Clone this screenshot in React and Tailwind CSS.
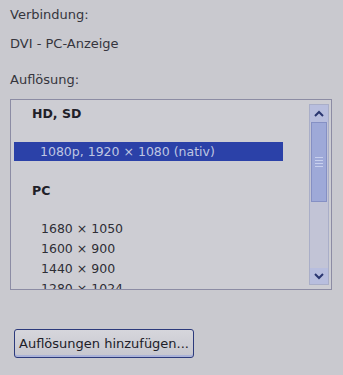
export default function App() {
  const font = { fontFamily: '"DejaVu Sans", "Liberation Sans", sans-serif' };
  return (
    <div className="w-[343px] h-[375px] bg-[#c9c9cf] text-[#35353d] overflow-hidden flex flex-col" style={font}>
      <div className="pl-[10px] pt-[6px] text-[13px] leading-[18px]">Verbindung:</div>
      <div className="pl-[10px] mt-[11px] text-[13px] leading-[18px]">DVI - PC-Anzeige</div>
      <div className="pl-[10px] mt-[18px] text-[13px] leading-[18px]">Auflösung:</div>
      <div className="ml-[10px] mt-[10px] w-[322px] h-[191px] border border-[#8c8ca4] bg-[#cdcdd3] flex overflow-hidden">
        <div className="flex-1 flex flex-col pl-[3px] overflow-hidden">
          <div className="pl-[18px] pt-[5px] h-[24px] text-[12.5px] font-bold leading-[18px] text-[#202028]">HD, SD</div>
          <div className="h-[1px] w-[200px] bg-gradient-to-r from-[#5566c8] via-[#6f7cc8] to-transparent"></div>
          <div className="mt-[19px] w-[269px] h-[19px] bg-[#2b41a8] pl-[26px] text-[12.5px] leading-[19px] text-[#bfc6e2] whitespace-nowrap">1080p, 1920 × 1080 (nativ)</div>
          <div className="pl-[18px] mt-[21px] h-[20px] text-[12.5px] font-bold leading-[18px] text-[#202028]">PC</div>
          <div className="mt-[1px] h-[1px] w-[220px] bg-gradient-to-r from-[#5566c8] via-[#6f7cc8] to-transparent"></div>
          <div className="pl-[27px] mt-[18px] flex flex-col text-[12.5px] leading-[20px] text-[#2e2e36] whitespace-nowrap">
            <div>1680 × 1050</div>
            <div>1600 × 900</div>
            <div>1440 × 900</div>
            <div>1280 × 1024</div>
          </div>
        </div>
        <div className="w-[20px] my-[4px] mr-[2px] flex flex-col bg-[#c2c4d6] border border-[#a9aec8]">
          <div className="h-[17px] flex items-center justify-center bg-[#b8bede]">
            <svg width="10" height="7" viewBox="0 0 10 7"><path d="M1 6 L5 2 L9 6" stroke="#2a3670" strokeWidth="2" fill="none" /></svg>
          </div>
          <div className="h-[80px] mx-[1px] bg-[#9ea9d8] border border-[#8590c4] flex flex-col items-center justify-center gap-[2px]">
            <div className="w-[8px] h-[1px] bg-[#c8d0ee]"></div>
            <div className="w-[8px] h-[1px] bg-[#c8d0ee]"></div>
            <div className="w-[8px] h-[1px] bg-[#c8d0ee]"></div>
            <div className="w-[8px] h-[1px] bg-[#c8d0ee]"></div>
          </div>
          <div className="flex-1"></div>
          <div className="h-[16px] flex items-center justify-center bg-[#b8bede]">
            <svg width="10" height="7" viewBox="0 0 10 7"><path d="M1 1 L5 5 L9 1" stroke="#2a3670" strokeWidth="2" fill="none" /></svg>
          </div>
        </div>
      </div>
      <div className="ml-[14px] mt-[39px] w-[180px] h-[29px] rounded-[3px] border border-[#2c3a7c] bg-gradient-to-b from-[#d6d6dc] to-[#c6c6ce] flex items-center pl-[4px] text-[13px] text-[#202028] whitespace-nowrap shadow-[inset_0_-2px_0_#aab2d8]">
        Auflösungen hinzufügen...
      </div>
    </div>
  );
}
